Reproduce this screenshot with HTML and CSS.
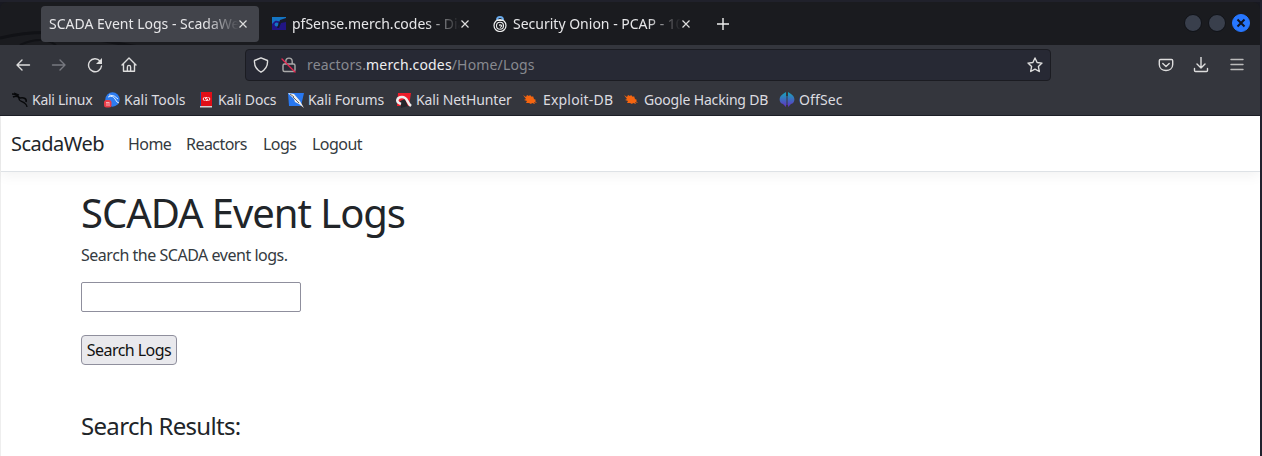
FILE: index.html
```html
<!DOCTYPE html>
<html lang="en">
<head>
<meta charset="utf-8">
<title>SCADA Event Logs - ScadaWeb</title>
<link rel="stylesheet" href="styles.css">
</head>
<body>
<div class="browser">
  <div class="tabs">
    <svg class="dragon-art" viewBox="0 0 260 41" fill="none" stroke="#111216"><path stroke-width="3" d="M0 34Q40 25 72 31T150 45"/><path stroke-width="2" d="M20 41Q42 31 56 41"/></svg>
    <div class="tab active"><span class="tab-title t1">SCADA Event Logs - ScadaWe</span><svg class="close" viewBox="0 0 10 10"><path d="M1.5 1.5l7 7m0-7l-7 7"/></svg></div>
    <div class="tab second">
      <svg class="favicon" viewBox="0 0 16 16"><path fill="#1475c3" d="M1 1h14v3L9 6 6 5 1 12z"/><path fill="#211584" d="M1 14V8l3-3c3-1 5 1 4 4l3-4h4v9z"/><circle cx="5.600" cy="8.500" r="2" fill="#1475c3"/><path fill="#171a2c" d="M9 4l6-2v4l-5 1-2 5H6z"/></svg>
      <span class="tab-title t2">pfSense.merch.codes - Dia</span><svg class="close" viewBox="0 0 10 10"><path d="M1.5 1.5l7 7m0-7l-7 7"/></svg></div>
    <div class="tab third">
      <svg class="favicon" viewBox="0 0 16 16" fill="none"><path stroke="#68a9ea" stroke-width="2" d="M5 4Q5 1 8 1t3 3"/><circle cx="8" cy="9.500" r="6" fill="#18191d" stroke="#eee" stroke-width="1.200"/><circle cx="8" cy="9.800" r="3.500" stroke="#eee" stroke-width="1.100"/><path stroke="#eee" stroke-width="1.100" d="M8 10q-1-2 1-1t-1 2.500M4.500 4.500h7"/></svg>
      <span class="tab-title t3">Security Onion - PCAP - 10</span><svg class="close" viewBox="0 0 10 10"><path d="M1.5 1.5l7 7m0-7l-7 7"/></svg></div>
    <svg class="plus" viewBox="0 0 14 14"><path d="M7 1v12M1 7h12"/></svg>
    <div class="window-buttons"><i></i><i></i><i class="window-close"><svg viewBox="0 0 10 10"><path d="M1.5 1.5l7 7m0-7l-7 7"/></svg></i></div>
  </div>
  <div class="toolbar">
    <svg class="icon back" viewBox="0 0 16 16"><path d="M14.500 8H2m5-5L2 8l5 5"/></svg>
    <svg class="icon forward" viewBox="0 0 16 16"><path d="M1.500 8H14M9 3l5 5-5 5"/></svg>
    <svg class="icon reload" viewBox="0 0 16 16"><path d="M13 4A6.500 6.500 0 1 0 14.500 9"/><path class="solid" d="M15 1v6H9z"/></svg>
    <svg class="icon home" viewBox="0 0 16 16"><path d="M1 8l7-7 7 7M2.500 7v7.300h11V7M6.400 14v-4q0-1.600 1.600-1.600T9.600 10v4"/></svg>
    <div class="address">
      <svg class="icon shield" viewBox="0 0 16 16"><path d="M8 .8l6.500 2.700C15 9 12 13 8 15.200 4 13 1 9 1.500 3.500z"/></svg>
      <svg class="icon lock" viewBox="0 0 16 16"><path d="M4.800 7V4.500C4.800 0 11.200 0 11.200 4.500V7M3.500 7h9q1.500 0 1.500 1.500v4.500q0 1.500-1.500 1.500h-9Q2 14.500 2 13V8.500Q2 7 3.500 7z"/><path class="slash" d="M1 2l13 13"/></svg>
      <span class="url">reactors.<b>merch.codes</b>/Home/Logs</span>
      <svg class="icon star" viewBox="0 0 16 16"><path d="M8 1l2.100 4.500 4.900.6-3.600 3.400.9 5L8 12.100 3.700 14.500l.9-5L1 6.100l4.900-.6z"/></svg>
    </div>
    <svg class="icon pocket" viewBox="0 0 16 16"><path d="M2.500 2.500h11q1.200 0 1.200 1.200V7.500c0 8-13.400 8-13.400 0V3.700q0-1.200 1.200-1.200zM4.800 6.500L8 9.500l3.200-3"/></svg>
    <svg class="icon download" viewBox="0 0 16 16"><path d="M8 0v11M4 7l4 4 4-4M1.500 11.500v2q0 1 1 1h11q1 0 1-1v-2"/></svg>
    <svg class="icon menu" viewBox="0 0 16 16"><path d="M2 2.500h12M2 7.500h12M2 12.500h12"/></svg>
  </div>
  <div class="bookmarks">
    <div class="bookmark kali"><svg viewBox="0 0 16 16" fill="none" stroke="#08090b"><path stroke-width="1.600" d="M0 2q6 0 7 4M1 5q4-2 7 1c4-1 7 1 6 4"/><path stroke-width="1.300" d="M7 6c-1 5 7 2 8 9M2 1l5 2"/></svg><span class="b1">Kali Linux</span></div>
    <div class="bookmark tools"><svg viewBox="0 0 16 16"><circle cx="8.500" cy="7.500" r="7.200" fill="#2d7cf0"/><path d="M4 5q5-2 7 2t4 4M5 3q6 0 9 4" fill="none" stroke="#dcecff"/><rect y="8" width="7.500" height="7.500" rx="2.500" fill="#eb3b45"/><path d="M2 10.500h3.500M3 11v3m2-3v3" stroke="#f6cbd0" fill="none" stroke-width=".8"/></svg><span class="b2">Kali Tools</span></div>
    <div class="bookmark docs"><svg viewBox="0 0 16 16"><path fill="#17488f" d="M1 0h2v15H1z"/><path fill="#e10e17" d="M2 0h11v14H2z"/><path fill="#d8cfd0" d="M1 14h12v1.500H1z"/><path d="M5.500 5L4 7l1.500 2m4-4L11 7 9.500 9M8.500 5.500h-2V7h2v1.500h-2" fill="none" stroke="#fff" stroke-width=".9"/></svg><span class="b3">Kali Docs</span></div>
    <div class="bookmark forums"><svg viewBox="0 0 16 16"><path fill="#2878f0" d="M0 1h16l-3 13H1z"/><path fill="#eee" d="M0 1l6 1 6 7 4 7-5-4-4-2-1-3z"/><path d="M5 5l6 6M2 2l4 3" stroke="#666"/></svg><span class="b4">Kali Forums</span></div>
    <div class="bookmark nethunter"><svg viewBox="0 0 16 16"><path fill="#ed1c2a" d="M2 1h13l-2 13H1z"/><path fill="#24252a" d="M4 9l5-2 3 7-7 2z"/><path fill="none" stroke="#eee" stroke-width="2.500" d="M5 12C-1 10 1 5 6 5c6 0 4 5 9 9"/></svg><span class="b5">Kali NetHunter</span></div>
    <div class="bookmark exploit"><svg viewBox="0 0 16 16"><path fill="#f56510" d="M0 3l3 2 1-2 2 1 1-1 2 2 1-1 1 3 2 1-1 1 2 2-3-1 1 2-3-1-1 1-2-1-3 0 1-2-3-1 2-1z"/></svg><span class="b6">Exploit-DB</span></div>
    <div class="bookmark hacking"><svg viewBox="0 0 16 16"><path fill="#f56510" d="M0 3l3 2 1-2 2 1 1-1 2 2 1-1 1 3 2 1-1 1 2 2-3-1 1 2-3-1-1 1-2-1-3 0 1-2-3-1 2-1z"/></svg><span class="b7">Google Hacking DB</span></div>
    <div class="bookmark"><svg viewBox="0 0 16 16"><defs><linearGradient id="off" gradientUnits="userSpaceOnUse" x1="0" y1="0" x2="0" y2="15"><stop stop-color="#15a8bb"/><stop offset="1" stop-color="#642fc2"/></linearGradient></defs><path fill="url(#off)" d="M4 2v10C0 11-1 5 4 2zM4 2L7 0v15l-3-3zM7.500 4h1v9h-1zM9 0l3 2v10L9 15zM12 2c5 3 4 9 0 10z"/></svg><span class="b8">OffSec</span></div>
  </div>
  <div class="page">
    <nav class="navbar"><span class="brand">ScadaWeb</span><span class="home-link">Home</span><span class="reactors-link">Reactors</span><span class="logs-link">Logs</span><span class="logout-link">Logout</span></nav>
    <main>
      <h1>SCADA Event Logs</h1>
      <p>Search the SCADA event logs.</p>
      <input type="text" aria-label="Search logs">
      <button>Search Logs</button>
      <h2>Search Results:</h2>
    </main>
  </div>
</div>
</body>
</html>
```
FILE: styles.css
```css
*{box-sizing:border-box}
body{margin:0;background:#181921;font-family:"Noto Sans",sans-serif;overflow:hidden}
svg{display:block;flex:none}
.browser{width:1262px;height:456px;border-top:2px solid #20212b;border-right:2px solid #20222e;overflow:hidden}
.tabs{height:43px;background:#1a1b1f;border-radius:7px 7px 0 0;display:flex;align-items:center;padding:0 10px 0 41px;position:relative}
.dragon-art{position:absolute;left:0;bottom:0;width:260px;height:41px}
.tab{height:36px;display:flex;align-items:center;font-size:14px;color:#e7e7e9;border-radius:4px;position:relative}
.active{width:218px;background:#42444b;padding-left:8px}
.second{width:222px;padding-left:12px}
.third{width:222px;padding-left:11px}
.favicon{width:16px;height:16px;margin-right:5px}
.tab-title{white-space:nowrap;flex:none;-webkit-mask-image:linear-gradient(90deg,#000 calc(100% - 34px),transparent);mask-image:linear-gradient(90deg,#000 calc(100% - 34px),transparent)}
.t1{width:190px}.t2{width:168px}.t3{width:168px}
.close{width:10px;height:10px;fill:none;stroke:#ddd;stroke-width:1.2}
.active .close{margin-left:-1px}
.plus{width:14px;height:14px;fill:none;stroke:#eee;stroke-width:1.4;margin-left:13px}
.window-buttons{margin-left:auto;display:flex;gap:6px;margin-top:-1px}
.window-buttons i{display:grid;place-items:center;width:18px;height:18px;border-radius:50%;background:#393f4c;border:1px solid #101217}
.window-buttons .window-close{background:#2777ff;border-color:#2777ff}
.window-close svg{width:10px;fill:none;stroke:#101320;stroke-width:2}
.toolbar{height:39px;background:#34363d;display:flex;align-items:center;padding-left:15px}
.icon{width:16px;height:16px;fill:none;stroke:#ddd;stroke-width:1.4;stroke-linejoin:round;stroke-linecap:round}
.icon .solid{fill:#ddd;stroke:none}
.forward{margin-left:20px;stroke:#777980}
.reload{margin-left:20px}.home{margin-left:18px}
.address{width:806px;height:32px;margin-left:108px;border:1px solid #1b1c22;border-radius:4px;background:#272934;display:flex;align-items:center;padding:0 7px}
.lock{margin-left:12px;stroke:#aaa}.lock .slash{stroke:#e52650}
.url{font-size:14px;color:#888990;margin-left:10px;white-space:nowrap;letter-spacing:.15px}
.url b{font-weight:400;color:#eeeef0}
.star{margin-left:auto}
.pocket{margin-left:107px}.download{margin-left:19px}.menu{margin-left:20px;stroke:#bbb}
.bookmarks{height:32px;background:#34363d;border-bottom:1px solid #1d1f27;display:flex;padding-left:12px}
.bookmark{display:flex;align-items:center;gap:4px;color:#dcdce0;font-size:14px;white-space:nowrap;flex:none}
.bookmark svg{width:16px;height:16px}
.kali{width:92px}.tools{width:95px}.docs{width:89px;gap:3px}.forums{width:108px}
.nethunter{width:127px}.exploit{width:101px}.hacking{width:155px}
.b1{letter-spacing:-.27px}.b3,.b4,.b5{letter-spacing:-.12px}.b6{letter-spacing:.18px}.b7{letter-spacing:-.17px}.b8{letter-spacing:.12px}
.page{height:340px;background:#fff;border-left:1px solid #eee;color:#212529}
.navbar{height:56px;border-bottom:1px solid #dee2e6;box-shadow:0 4px 12px rgba(0,0,0,.05);padding:0 11px 0 10px;display:flex;align-items:center;font-size:16px;color:#343a40;white-space:nowrap;letter-spacing:-.55px}
.brand{font-size:20px;color:#212529;width:117px;letter-spacing:-.5px}
.home-link{width:58px}.reactors-link{width:77px}.logs-link{width:49px}
main{padding:17px 80px;display:flex;flex-direction:column;align-items:flex-start}
h1,h2,p{margin:0;font-weight:400;white-space:nowrap}
h1{font-size:40px;line-height:48px;letter-spacing:-1.05px}
p{font-size:16px;line-height:24px;margin-top:6px;color:#343a40;letter-spacing:-.47px}
input{width:220px;height:30px;border:1px solid #8f8f9d;border-radius:2px;margin:15px 0 0;background:#fff}
button{height:30px;width:96px;margin-top:23px;padding:0;border:1px solid #8f8f9d;border-radius:4px;background:#e9e9ed;font:16px "Noto Sans",sans-serif;white-space:nowrap;color:#111;letter-spacing:-.55px}
h2{font-size:24px;line-height:29px;margin-top:46px;letter-spacing:-.68px}
```
